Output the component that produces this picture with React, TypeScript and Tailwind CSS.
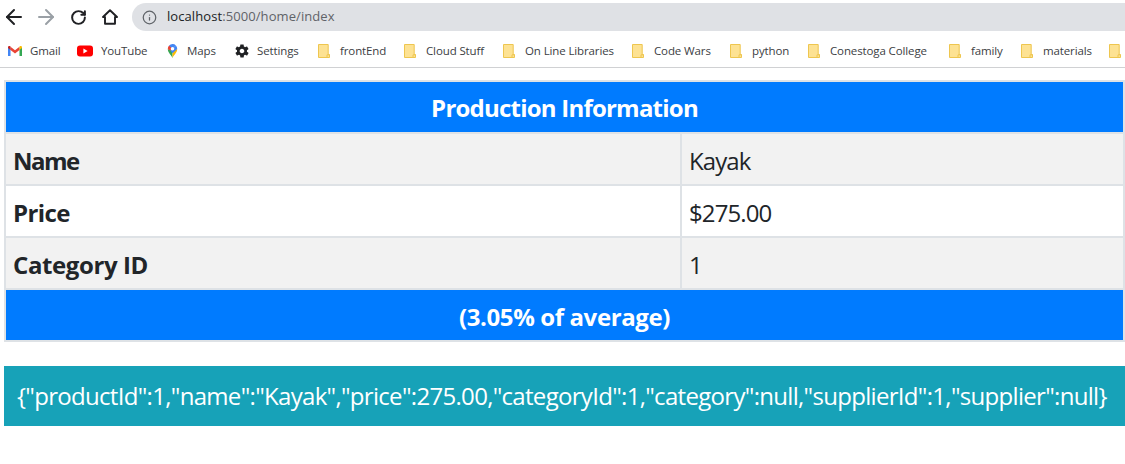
import { ArrowLeft, ArrowRight, RotateCw, Info } from 'lucide-react';
import { IoMdSettings } from 'react-icons/io';

const FONT = "font-['Open_Sans','Noto_Sans',sans-serif]";

function GmailIcon() {
  return (
    <svg width="16" height="16" viewBox="0 0 16 16">
      <path d="M1 13V4.5L3.5 5.5V13H1.9Z" fill="#4285f4" />
      <path d="M12.5 13V5.5L15 4.5V13H14Z" fill="#34a853" />
      <path d="M3.5 7V3.8L8 7.2L12.5 3.8V7L8 10.4Z" fill="#ea4335" />
      <path d="M1 5V4.2C1 3 2.4 2.5 3.3 3.2L3.5 3.8V7Z" fill="#c5221f" />
      <path d="M15 5V4.2C15 3 13.6 2.5 12.7 3.2L12.5 3.8V7Z" fill="#fbbc04" />
    </svg>
  );
}

function YouTubeIcon() {
  return (
    <svg width="16" height="16" viewBox="0 0 16 16">
      <rect x="0" y="2.5" width="16" height="11" rx="3" fill="#ff0000" />
      <path d="M6.4 5.6L10.6 8L6.4 10.4Z" fill="#fff" />
    </svg>
  );
}

function MapsIcon() {
  return (
    <svg width="16" height="16" viewBox="0 0 16 16">
      <path d="M8 15.5C7 12.5 3 10 3 5.8L8 8Z" fill="#34a853" />
      <path d="M8 15.5C9 12.5 13 10 13 5.8L8 8Z" fill="#fbbc04" />
      <path d="M4.4 2.2A5 5 0 0 0 3 5.8L5.6 7.6L8 4Z" fill="#ea4335" />
      <path d="M4.4 2.2A5 5 0 0 1 11.6 2.1L8 6Z" fill="#4285f4" />
      <path d="M11.6 2.1A5 5 0 0 1 13 5.8L8 10.5L6 8Z" fill="#4285f4" />
      <circle cx="8" cy="5.6" r="1.9" fill="#fff" />
    </svg>
  );
}

function FolderIcon() {
  return (
    <svg width="12" height="14" viewBox="0 0 12 14">
      <path d="M.5.5H10.2V10.5H11.5V13.5H.5Z" fill="#fde293" stroke="#eec64f" />
      <path d="M9 13V10.8H11.4" fill="none" stroke="#eec64f" />
    </svg>
  );
}

const bookmarks = [
  { label: 'Gmail', icon: <GmailIcon />, width: 'w-[70px]', slot: 'w-[16px]' },
  { label: 'YouTube', icon: <YouTubeIcon />, width: 'w-[88px]', slot: 'w-[17px]' },
  { label: 'Maps', icon: <MapsIcon />, width: 'w-[69px]', slot: 'w-[15px]' },
  { label: 'Settings', icon: <IoMdSettings size={16} color="#202124" />, width: 'w-[84px]', slot: 'w-[16px]' },
  { label: 'frontEnd', icon: <FolderIcon />, width: 'w-[86px]', slot: 'w-[15px]' },
  { label: 'Cloud Stuff', icon: <FolderIcon />, width: 'w-[99px]', slot: 'w-[15px]' },
  { label: 'On Line Libraries', icon: <FolderIcon />, width: 'w-[129px]', slot: 'w-[15px]' },
  { label: 'Code Wars', icon: <FolderIcon />, width: 'w-[98px]', slot: 'w-[15px]' },
  { label: 'python', icon: <FolderIcon />, width: 'w-[78px]', slot: 'w-[15px]' },
  { label: 'Conestoga College', icon: <FolderIcon />, width: 'w-[141px]', slot: 'w-[15px]' },
  { label: 'family', icon: <FolderIcon />, width: 'w-[72px]', slot: 'w-[15px]' },
  { label: 'materials', icon: <FolderIcon />, width: 'w-[88px]', slot: 'w-[15px]' },
  { label: '', icon: <FolderIcon />, width: 'w-[16px]', slot: 'w-[15px]' },
];

const rows = [
  { name: 'Name', value: 'Kayak', shade: true, tracking: 'tracking-[-1.5px]' },
  { name: 'Price', value: '$275.00', shade: false, tracking: 'tracking-[-0.6px]' },
  { name: 'Category ID', value: '1', shade: true, tracking: 'tracking-[-0.4px]' },
];

export default function App() {
  return (
    <div className={`${FONT} h-[464px] w-[1125px] overflow-hidden bg-white`}>
      {/* Browser chrome */}
      <div className="flex h-[34px] items-start pt-[3px]">
        <div className="flex h-[28px] w-[132px] items-center pl-[2px]">
          <ArrowLeft size={24} color="#202124" strokeWidth={2} />
          <ArrowRight size={24} color="#9aa0a6" strokeWidth={2} className="ml-[8px]" />
          <RotateCw size={17} color="#202124" strokeWidth={2.8} className="ml-[12px]" />
          <svg width="16" height="16" viewBox="0 0 16 16" className="ml-[15px]">
            <path d="M8 1.2L15 8H13V14.8H3V8H1Z" fill="none" stroke="#202124" strokeWidth="1.9" strokeLinejoin="round" />
          </svg>
        </div>
        <div className="flex h-[28px] flex-1 items-center rounded-l-full bg-[#dfe1e5] pl-[10px]">
          <Info size={15} color="#5f6368" strokeWidth={2} />
          <span className="ml-[10px] text-[13px] tracking-[0.08px] text-[#5f6368]">
            <span className="text-[#202124]">localhost</span>:5000/home/index
          </span>
        </div>
      </div>
      <div className="flex h-[34px] items-center border-b border-[#d0d1d3] pl-[7px] text-[11.5px] tracking-[-0.12px] text-[#3c4043]">
        {bookmarks.map((b, i) => (
          <div key={i} className={`${b.width} flex shrink-0 items-center`}>
            <span className={`${b.slot} flex shrink-0 justify-start`}>{b.icon}</span>
            {b.label && <span className="ml-[7px] whitespace-nowrap">{b.label}</span>}
          </div>
        ))}
      </div>

      {/* Page */}
      <div className="pl-[4px] pt-[12px]">
        <table className="w-[1121px] table-fixed border-collapse border-2 border-[#dee2e6] text-[24px] text-[#212529]">
          <colgroup>
            <col className="w-[676px]" />
            <col />
          </colgroup>
          <tbody>
            <tr>
              <th colSpan={2} className="h-[52px] bg-[#007bff] p-0 pt-[1px] text-center font-bold tracking-[-0.78px] text-white">
                Production Information
              </th>
            </tr>
            {rows.map((r) => (
              <tr key={r.name} className={r.shade ? 'bg-[#f2f2f2]' : 'bg-white'}>
                <th className={`${r.tracking} h-[52px] border-2 border-[#dee2e6] pt-[4px] pr-[8px] pb-0 pl-[7px] text-left font-bold`}>
                  {r.name}
                </th>
                <td className="h-[52px] border-2 border-[#dee2e6] pt-[4px] pr-[8px] pb-0 pl-[7px] tracking-[-0.9px]">{r.value}</td>
              </tr>
            ))}
            <tr>
              <th colSpan={2} className="h-[52px] bg-[#007bff] p-0 pt-[3px] text-center font-bold tracking-[-0.38px] text-white">
                (3.05% of average)
              </th>
            </tr>
          </tbody>
        </table>
        <div className="mt-[24px] flex h-[60px] w-[1121px] items-center bg-[#17a2b8] pl-[13px] text-[24px] tracking-[-0.69px] whitespace-nowrap text-white">
          {'{"productId":1,"name":"Kayak","price":275.00,"categoryId":1,"category":null,"supplierId":1,"supplier":null}'}
        </div>
      </div>
    </div>
  );
}
